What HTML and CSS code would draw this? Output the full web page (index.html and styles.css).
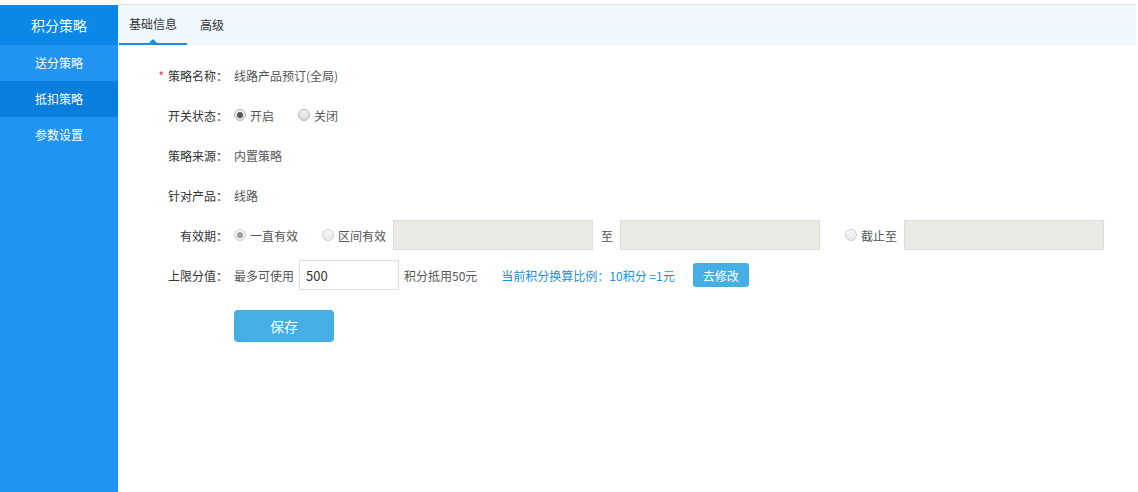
FILE: index.html
```html
<!DOCTYPE html>
<html lang="zh-CN">
<head>
  <meta charset="UTF-8" />
  <title>积分策略</title>
  <link rel="stylesheet" href="styles.css">
</head>
<body>

  <div class="layout">
    <div class="sidebar">
      <div class="side-title">积分策略</div>
      <div class="side-item">送分策略</div>
      <div class="side-item active">抵扣策略</div>
      <div class="side-item">参数设置</div>
    </div>

    <div class="main">
      <div class="tabs">
        <div class="tab current">基础信息</div>
        <div class="tab">高级</div>
      </div>

      <div class="form">
        <div class="row">
          <div class="label"><span class="req">*</span>策略名称：</div>
          <div class="value">线路产品预订(全局)</div>
        </div>

        <div class="row">
          <div class="label">开关状态：</div>
          <label class="radio"><span class="dot checked"></span>开启</label>
          <label class="radio"><span class="dot"></span>关闭</label>
        </div>

        <div class="row">
          <div class="label">策略来源：</div>
          <div class="value">内置策略</div>
        </div>

        <div class="row">
          <div class="label">针对产品：</div>
          <div class="value">线路</div>
        </div>

        <div class="row">
          <div class="label">有效期：</div>
          <label class="radio"><span class="dot checked disabled"></span>一直有效</label>
          <label class="radio range"><span class="dot disabled"></span>区间有效</label>
          <input type="text" class="date-input" disabled />
          <span class="to">至</span>
          <input type="text" class="date-input end" disabled />
          <label class="radio until"><span class="dot disabled"></span>截止至</label>
          <input type="text" class="date-input" disabled />
        </div>

        <div class="row">
          <div class="label">上限分值：</div>
          <span class="text">最多可使用</span>
          <input type="text" class="num-input" value="500" />
          <span class="text">积分抵用50元</span>
          <span class="ratio">当前积分换算比例：10积分 =1元</span>
          <button class="small-btn">去修改</button>
        </div>

        <div class="row btn-row">
          <div class="label"></div>
          <button class="save-btn">保存</button>
        </div>
      </div>
    </div>
  </div>

</body>
</html>
```

FILE: styles.css
```css
body {
  font-family: "Microsoft YaHei", "Noto Sans CJK SC", sans-serif;
  margin: 0;
  padding-top: 4px;
  background-color: #ffffff;
  color: #333333;
  font-size: 12px;
}

.layout {
  display: flex;
  height: 488px;
}

.sidebar {
  width: 118px;
  flex-shrink: 0;
  background-color: #2193f0;
  color: #ffffff;
  margin-top: 1px;
}

.side-title {
  height: 40px;
  line-height: 40px;
  text-align: center;
  font-size: 14px;
  background-color: #0b87e8;
}

.side-item {
  height: 36px;
  line-height: 36px;
  text-align: center;
}

.side-item.active {
  background-color: #0a7edc;
}

.main {
  flex: 1;
  margin-right: 2px;
}

.tabs {
  display: flex;
  height: 40px;
  background-color: #eff7ff;
  border-top: 1px solid #dde5ef;
  padding-left: 1px;
}

.tab {
  position: relative;
  padding: 0 10px;
  line-height: 40px;
  color: #333333;
  margin-right: 3px;
}

.tab.current {
  border-bottom: 2px solid #1a8fe0;
  line-height: 38px;
}

.tab.current::after {
  content: "";
  position: absolute;
  left: 50%;
  bottom: 0;
  margin-left: -4px;
  border-left: 4px solid transparent;
  border-right: 4px solid transparent;
  border-bottom: 4px solid #1a8fe0;
}

.form {
  padding-top: 10px;
}

.row {
  display: flex;
  align-items: center;
  height: 40px;
}

.label {
  width: 110px;
  flex-shrink: 0;
  text-align: right;
  margin-right: 6px;
  color: #333333;
}

.req {
  color: #e4393c;
  margin-right: 4px;
}

.value,
.text {
  color: #555555;
}

.radio {
  display: flex;
  align-items: center;
  color: #555555;
  margin-right: 24px;
}

.dot {
  width: 10px;
  height: 10px;
  border: 1px solid #b5b5b5;
  border-radius: 50%;
  background: linear-gradient(#f4f4f4, #d9d9d9);
  margin-right: 4px;
  position: relative;
}

.dot.checked::after {
  content: "";
  position: absolute;
  left: 2px;
  top: 2px;
  width: 6px;
  height: 6px;
  border-radius: 50%;
  background-color: #555555;
}

.dot.disabled {
  border-color: #d0d0d0;
  background: linear-gradient(#f8f8f8, #e8e8e8);
}

.dot.disabled.checked::after {
  background-color: #a0a0a0;
}

.radio.range {
  margin-right: 7px;
}

.radio.until {
  margin-left: 1px;
  margin-right: 7px;
}

.date-input {
  width: 200px;
  height: 30px;
  box-sizing: border-box;
  border: 1px solid #dddddd;
  background-color: #ebeae4;
}

.to {
  color: #555555;
  margin: 0 7px 0 8px;
}

.date-input.end {
  margin-right: 24px;
}

.num-input {
  width: 100px;
  height: 30px;
  box-sizing: border-box;
  border: 1px solid #dddddd;
  padding: 0 6px;
  margin: 0 5px;
  font-family: inherit;
  font-size: 13px;
  color: #333333;
}

.ratio {
  color: #1a8fe0;
  margin-left: 24px;
}

.small-btn {
  margin-left: 18px;
  width: 56px;
  height: 24px;
  border: none;
  border-radius: 3px;
  background-color: #45aee5;
  color: #ffffff;
  font-family: inherit;
  font-size: 12px;
}

.btn-row {
  height: 47px;
  align-items: flex-end;
}

.save-btn {
  width: 100px;
  height: 32px;
  border: none;
  border-radius: 4px;
  background-color: #45aee5;
  color: #ffffff;
  font-family: inherit;
  font-size: 14px;
}
```
